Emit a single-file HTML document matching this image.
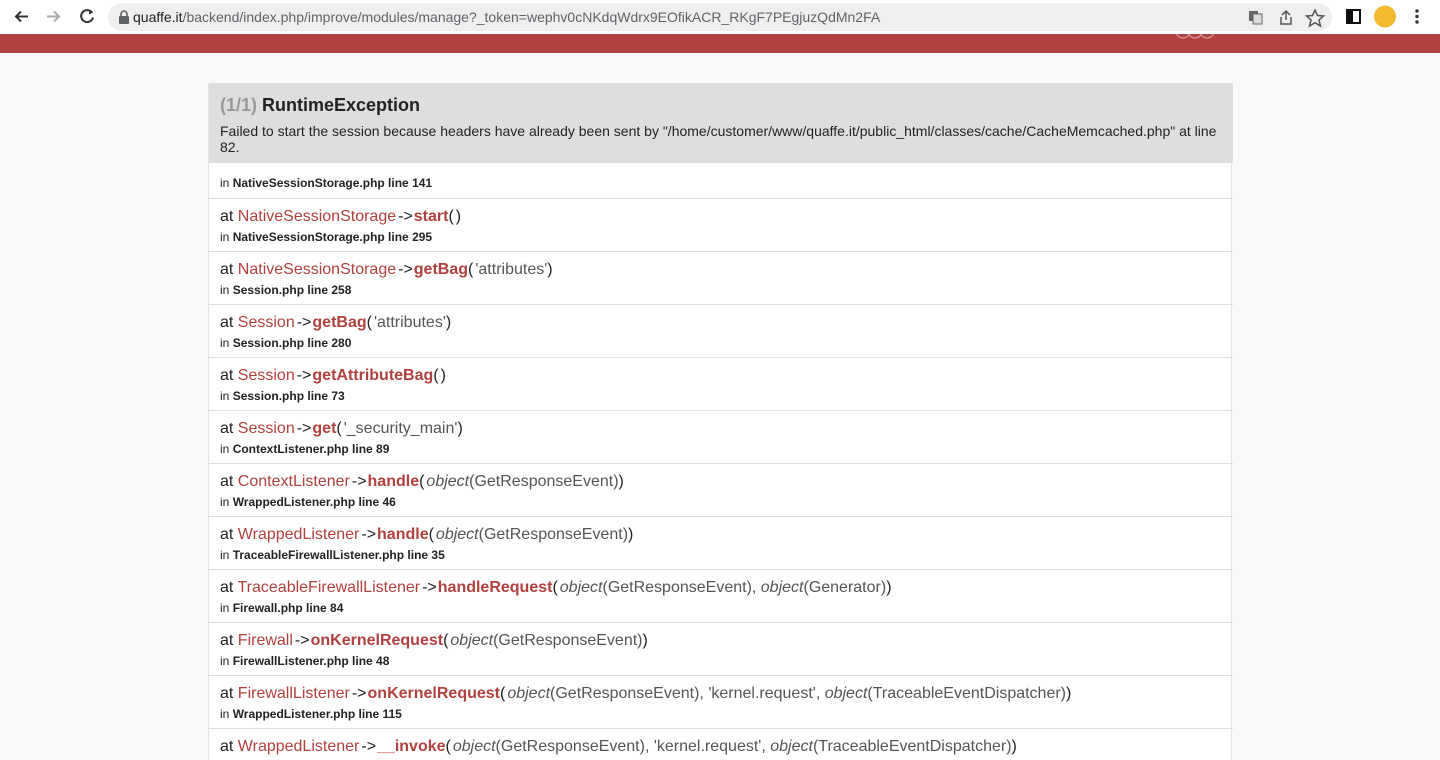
<!DOCTYPE html>
<html><head><meta charset="utf-8"><style>
*{margin:0;padding:0;box-sizing:border-box}
html,body{width:1440px;height:760px;overflow:hidden}
body{background:#f9f9f9;font-family:"Liberation Sans",Arial,sans-serif;position:relative}
.chrome{position:absolute;left:0;top:0;width:1440px;height:34px;background:#fff}
.url{position:absolute;left:108px;top:3px;width:1224px;height:28px;border-radius:14px;background:#efefef}
.url .t{position:absolute;left:25px;top:6px;font-size:14px;color:#5f6368;white-space:nowrap}
.url .t b{font-weight:normal;color:#202124}
.red{position:absolute;left:0;top:34px;width:1440px;height:19px;background:#b0413e}
.box{position:absolute;left:208px;top:83px;width:1024px;height:680px;background:#fff;border:1px solid #e6e6e6;border-top:none}
.head{position:absolute;left:0;top:0;width:1024px;height:80px;background:#dedede}
.h1{position:absolute;left:11px;top:12px;font-size:18px;font-weight:bold;color:#222}
.h1 span{color:#999}
.msg{position:absolute;left:11px;top:40px;font-size:14px;line-height:16px;color:#222;width:1010px;white-space:nowrap}
.row{position:absolute;left:0;width:1024px;border-top:1px solid #e0e0e0}
.row .a{position:absolute;left:11px;top:9px;font-size:16px;color:#222;white-space:nowrap}
.row .i{position:absolute;left:11px;font-size:12px;color:#222;white-space:nowrap}
.row .i b{font-weight:bold}
.c{color:#b0413e}
.m{color:#b0413e;font-weight:bold}
.g{color:#555}
.g i{font-style:italic}
.ar{margin:0 1px 0 2px}
.p{margin-right:2px}
.q{margin-left:1px}
</style></head><body>
<div class="chrome">
<svg width="100" height="34" style="position:absolute;left:0;top:0">
<path d="M28 16.5H16M21 11.5l-5 5 5 5" stroke="#333" stroke-width="2" fill="none"/>
<path d="M47 16.5h12M54 11.5l5 5-5 5" stroke="#aaa" stroke-width="2" fill="none"/>
<path d="M92 12.5a6 6 0 1 0 1 5" stroke="#333" stroke-width="2" fill="none"/><path d="M89 9.5l4 3-4 2z" fill="#333"/>
</svg>
<div class="url">
<svg width="12" height="14" style="position:absolute;left:10px;top:7px"><rect x="1" y="6" width="10" height="8" rx="1" fill="#5f6368"/><path d="M3 6V4a3 3 0 0 1 6 0v2" stroke="#5f6368" stroke-width="1.6" fill="none"/></svg>
<div class="t"><b>quaffe.it</b>/backend/index.php/improve/modules/manage?_token=wephv0cNKdqWdrx9EOfikACR_RKgF7PEgjuzQdMn2FA</div>
<svg width="100" height="28" style="position:absolute;left:1134px;top:0">
<rect x="7" y="8" width="9" height="10" fill="#666"/><rect x="11" y="11" width="9" height="10" fill="#ddd" stroke="#666"/>
<path d="M40 12l4-4 4 4M44 8v9M39 14v7h10v-7" stroke="#555" stroke-width="1.5" fill="none"/>
<path d="M73 7l2.5 5.5 6 .5-4.5 4 1.5 6-5.5-3.3-5.5 3.3 1.5-6-4.5-4 6-.5z" stroke="#555" stroke-width="1.5" fill="none"/>
</svg>
</div>
<svg width="100" height="34" style="position:absolute;left:1340px;top:0">
<rect x="7" y="10" width="13" height="13" fill="none" stroke="#111" stroke-width="2"/><rect x="7" y="10" width="6" height="13" fill="#111"/>
<circle cx="45" cy="16.5" r="11" fill="#f3b92f"/>
<circle cx="77" cy="11" r="1.7" fill="#333"/><circle cx="77" cy="16.5" r="1.7" fill="#333"/><circle cx="77" cy="22" r="1.7" fill="#333"/>
</svg>
</div>
<div class="red"><svg width="60" height="19" style="position:absolute;left:1175px;top:0"><g stroke="#d99a98" fill="none" stroke-width="1.3"><circle cx="8" cy="-3" r="7"/><circle cx="20" cy="-3" r="7"/><circle cx="32" cy="-3" r="7"/></g></svg></div>
<div class="box">
<div class="head">
<div class="h1"><span>(1/1)</span> RuntimeException</div>
<div class="msg">Failed to start the session because headers have already been sent by "/home/customer/www/quaffe.it/public_html/classes/cache/CacheMemcached.php" at line<br>82.</div>
</div>
<div class="row" style="top:81px;height:34px;border-top:none"><div class="i" style="top:12px">in <b>NativeSessionStorage.php line 141</b></div></div>

<div class="row" style="top:115px;height:53px"><div class="a">at <span class="c">NativeSessionStorage</span><span class="ar">-&gt;</span><span class="m">start</span><span class="p">(</span>)</div><div class="i" style="top:31px">in <b>NativeSessionStorage.php line 295</b></div></div>
<div class="row" style="top:168px;height:53px"><div class="a">at <span class="c">NativeSessionStorage</span><span class="ar">-&gt;</span><span class="m">getBag</span><span class="p">(</span><span class="g">'attributes'</span>)</div><div class="i" style="top:31px">in <b>Session.php line 258</b></div></div>
<div class="row" style="top:221px;height:53px"><div class="a">at <span class="c">Session</span><span class="ar">-&gt;</span><span class="m">getBag</span><span class="p">(</span><span class="g">'attributes'</span>)</div><div class="i" style="top:31px">in <b>Session.php line 280</b></div></div>
<div class="row" style="top:274px;height:53px"><div class="a">at <span class="c">Session</span><span class="ar">-&gt;</span><span class="m">getAttributeBag</span><span class="p">(</span>)</div><div class="i" style="top:31px">in <b>Session.php line 73</b></div></div>
<div class="row" style="top:327px;height:53px"><div class="a">at <span class="c">Session</span><span class="ar">-&gt;</span><span class="m">get</span><span class="p">(</span><span class="g">'_security_main'</span>)</div><div class="i" style="top:31px">in <b>ContextListener.php line 89</b></div></div>
<div class="row" style="top:380px;height:53px"><div class="a">at <span class="c">ContextListener</span><span class="ar">-&gt;</span><span class="m">handle</span><span class="p">(</span><span class="g"><i>object</i>(GetResponseEvent)</span>)</div><div class="i" style="top:31px">in <b>WrappedListener.php line 46</b></div></div>
<div class="row" style="top:433px;height:53px"><div class="a">at <span class="c">WrappedListener</span><span class="ar">-&gt;</span><span class="m">handle</span><span class="p">(</span><span class="g"><i>object</i>(GetResponseEvent)</span>)</div><div class="i" style="top:31px">in <b>TraceableFirewallListener.php line 35</b></div></div>
<div class="row" style="top:486px;height:53px"><div class="a">at <span class="c">TraceableFirewallListener</span><span class="ar">-&gt;</span><span class="m">handleRequest</span><span class="p">(</span><span class="g"><i>object</i>(GetResponseEvent), <i>object</i>(Generator)</span>)</div><div class="i" style="top:31px">in <b>Firewall.php line 84</b></div></div>
<div class="row" style="top:539px;height:53px"><div class="a">at <span class="c">Firewall</span><span class="ar">-&gt;</span><span class="m">onKernelRequest</span><span class="p">(</span><span class="g"><i>object</i>(GetResponseEvent)</span>)</div><div class="i" style="top:31px">in <b>FirewallListener.php line 48</b></div></div>
<div class="row" style="top:592px;height:53px"><div class="a">at <span class="c">FirewallListener</span><span class="ar">-&gt;</span><span class="m">onKernelRequest</span><span class="p">(</span><span class="g"><i>object</i>(GetResponseEvent), 'kernel.request', <i>object</i>(TraceableEventDispatcher)</span>)</div><div class="i" style="top:31px">in <b>WrappedListener.php line 115</b></div></div>
<div class="row" style="top:645px;height:53px"><div class="a">at <span class="c">WrappedListener</span><span class="ar">-&gt;</span><span class="m">__invoke</span><span class="p">(</span><span class="g"><i>object</i>(GetResponseEvent), 'kernel.request', <i>object</i>(TraceableEventDispatcher)</span>)</div></div>
</div>
</body></html>
